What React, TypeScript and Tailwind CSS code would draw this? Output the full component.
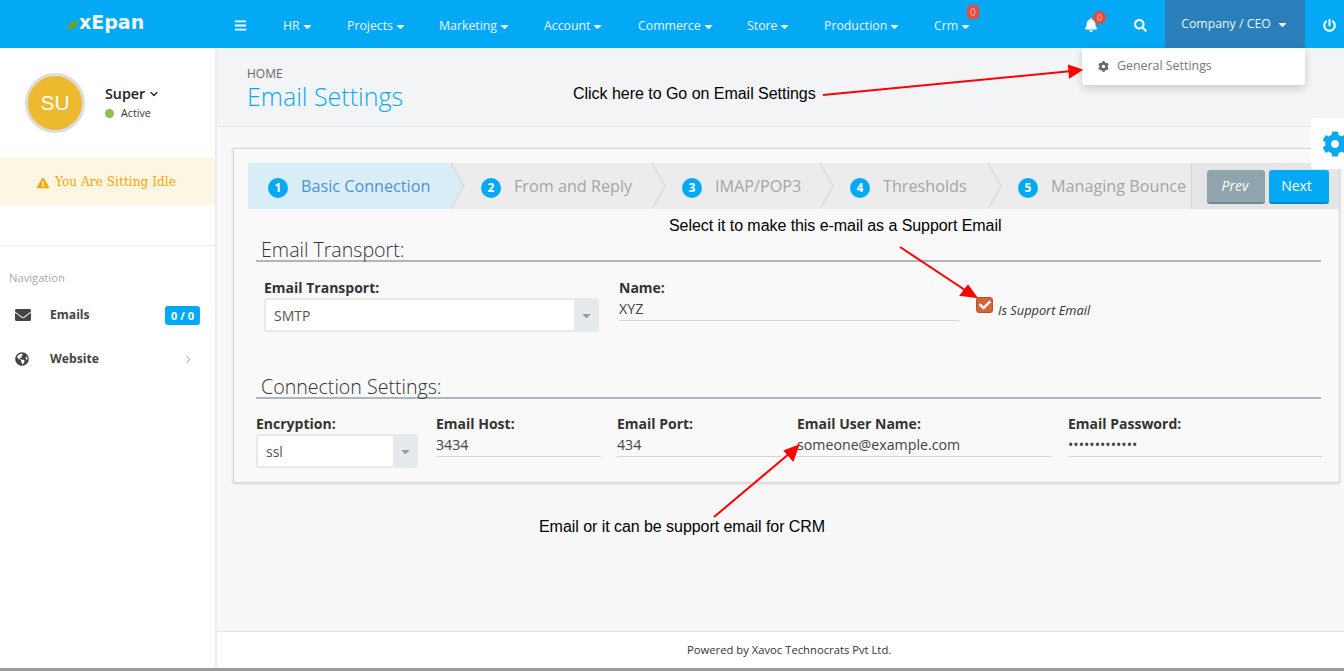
import { ChevronDown, ChevronRight } from 'lucide-react';
import {
  FaBars,
  FaBell,
  FaCaretDown,
  FaCheck,
  FaCog,
  FaEnvelope,
  FaExclamationTriangle,
  FaGlobeAmericas,
  FaPowerOff,
  FaSearch,
} from 'react-icons/fa';

const menus = [
  { label: 'HR', cls: 'w-[64px]' },
  { label: 'Projects', cls: 'w-[92px]' },
  { label: 'Marketing', cls: 'w-[105px]' },
  { label: 'Account', cls: 'w-[94px]' },
  { label: 'Commerce', cls: 'w-[109px]' },
  { label: 'Store', cls: 'w-[77px]' },
  { label: 'Production', cls: 'w-[110px]' },
];

const steps = [
  { n: 1, label: 'Basic Connection', cls: 'w-[203px] pl-[20px] bg-[#d9edf7] rounded-l-[4px] text-[#4a94d0]' },
  { n: 2, label: 'From and Reply', cls: 'w-[201px] pl-[30px] text-[#a5a5a5]' },
  { n: 3, label: 'IMAP/POP3', cls: 'w-[168px] pl-[30px] text-[#a5a5a5]' },
  { n: 4, label: 'Thresholds', cls: 'w-[168px] pl-[30px] text-[#a5a5a5]' },
  { n: 5, label: 'Managing Bounce', cls: 'w-[203px] pl-[30px] text-[#a5a5a5]' },
];

function Field({ label, value, cls }: { label: string; value: string; cls: string }) {
  return (
    <div className={cls}>
      <div className="text-[14px] leading-[20px] font-bold text-[#333]">{label}</div>
      <div className="h-[23px] border-b border-[#d5d5d5] text-[14.2px] leading-[22px] text-[#444]">{value}</div>
    </div>
  );
}

function SelectBox({ value, cls, arrow }: { value: string; cls: string; arrow: string }) {
  return (
    <div className={`flex h-[34px] rounded-[3px] bg-[#e6e9ed] p-[2px] pr-0 ${cls}`}>
      <div className="flex-1 bg-white pl-[8px] text-[14px] leading-[32px] text-[#555]">{value}</div>
      <div className={`flex items-center justify-center text-[#999] ${arrow}`}>
        <FaCaretDown size={13} />
      </div>
    </div>
  );
}

function Step({ n, label, cls, last }: { n: number; label: string; cls: string; last: boolean }) {
  return (
    <div className={`relative flex h-[46px] shrink-0 items-center ${cls}`}>
      <span className="mt-[3px] flex h-[20px] w-[20px] shrink-0 items-center justify-center rounded-full bg-[#03a9f4] text-[12px] font-bold text-white">
        {n}
      </span>
      <span className="ml-[13px] whitespace-nowrap text-[16.2px]">{label}</span>
      {!last && (
        <svg className="absolute -right-[14px] top-0 z-10" width="14" height="46" viewBox="0 0 14 46">
          {n === 1 && <path d="M0 0 L13 23 L0 46 Z" fill="#d9edf7" />}
          {n !== 1 && <path d="M0 0 L13 23 L0 46 Z" fill="#ececec" />}
          <path d="M0 0 L13 23 L0 46" fill="none" stroke="#d2d2d2" />
        </svg>
      )}
    </div>
  );
}

export default function App() {
  return (
    <div className="relative flex h-[671px] w-[1344px] flex-col overflow-hidden bg-[#f8f8f8] font-['Open_Sans',sans-serif]">
      {/* Top bar */}
      <header className="flex h-[48px] shrink-0 items-center bg-[#03a9f4] text-white">
        <div className="flex w-[234px] items-center pl-[66px]">
          <svg width="13" height="11" viewBox="0 0 13 11" className="mt-[3px]">
            <path d="M0.5 10.5 C1 4 6 0.5 12.5 0.5 C12 6 7 10 2 8.8 Z" fill="#6aa52a" />
          </svg>
          <span className="-mt-[3px] font-['DejaVu_Sans',sans-serif] text-[19px] font-bold leading-none text-[#f2f7f4]">xEpan</span>
        </div>
        <FaBars size={13} className="mt-[3px]" />
        <nav className="ml-[36px] flex items-center pt-[4px] text-[12.3px] text-[#e8f6fe]">
          {menus.map((m) => (
            <div key={m.label} className={`flex items-center ${m.cls}`}>
              {m.label}
              <FaCaretDown size={13} className="ml-[1px]" />
            </div>
          ))}
          <div className="relative flex items-center">
            Crm
            <FaCaretDown size={13} className="ml-[1px]" />
            <span className="absolute -top-[12px] left-[33px] h-[14px] rounded-[4px] bg-[#e74c3c] px-[3px] text-[10px] leading-[14px] text-[#ffb0a8]">0</span>
          </div>
        </nav>
        <div className="relative ml-auto mr-[36px] mt-[2px]">
          <FaBell size={14} />
          <span className="absolute -right-[8px] -top-[7px] h-[13px] w-[13px] rounded-full bg-[#e74c3c] text-center text-[9px] leading-[13px] text-[#ffc9c3]">0</span>
        </div>
        <FaSearch size={13} className="mr-[18px] mt-[2px]" />
        <div className="flex h-[48px] w-[140px] items-center justify-center bg-[#2a7fba] pt-[1px] text-[12.3px] text-[#e8f6fe]">
          Company / CEO
          <FaCaretDown size={13} className="ml-[5px]" />
        </div>
        <div className="flex w-[39px] justify-center pl-[9px] pt-[2px]">
          <FaPowerOff size={13} />
        </div>
      </header>

      <div className="flex min-h-0 flex-1">
        {/* Sidebar */}
        <aside className="w-[217px] shrink-0 border-r-[2px] border-[#e9ecf0] bg-white">
          <div className="flex h-[110px] items-center pl-[25px]">
            <div className="flex h-[60px] w-[60px] items-center justify-center rounded-full border-[3px] border-[#dddddd] bg-[#edb92e] font-['Liberation_Sans',sans-serif] text-[21px] text-white">
              SU
            </div>
            <div className="ml-[20px]">
              <div className="-mt-[1px] flex items-center text-[14.3px] font-semibold leading-[20px] text-[#222]">
                Super
                <ChevronDown size={12} strokeWidth={2.5} className="ml-[3px]" />
              </div>
              <div className="mt-[1px] flex items-center text-[10.7px] leading-[16px] text-[#333]">
                <span className="mr-[7px] h-[9px] w-[9px] rounded-full bg-[#8bc34a]" />
                Active
              </div>
            </div>
          </div>
          <div className="flex h-[47px] items-center justify-center bg-[#fdf6e3] pr-[2px] pt-[2px] font-['DejaVu_Serif',serif] text-[12.2px] text-[#ffa500]">
            <FaExclamationTriangle size={12} className="mr-[6px]" />
            You Are Sitting Idle
          </div>
          <div className="mt-[40px] border-t border-[#eeeeee] pl-[9px] pt-[24px] text-[11.2px] leading-[15px] text-[#aaaaaa]">
            Navigation
          </div>
          <div className="mt-[18px] flex h-[24px] items-center pl-[15px] pr-[15px] text-[12.2px] font-bold text-[#444]">
            <FaEnvelope size={16} />
            <span className="ml-[19px]">Emails</span>
            <span className="ml-auto h-[19px] w-[35px] rounded-[3px] bg-[#03a9f4] text-center text-[11px] leading-[19px] text-white">0 / 0</span>
          </div>
          <div className="mt-[20px] flex h-[24px] items-center pl-[15px] pr-[21px] text-[12.2px] font-bold text-[#444]">
            <FaGlobeAmericas size={14} />
            <span className="ml-[21px]">Website</span>
            <ChevronRight size={11} className="ml-auto text-[#888]" />
          </div>
        </aside>

        {/* Main */}
        <main className="flex min-w-0 flex-1 flex-col">
          <div className="h-[79px] shrink-0 border-b border-[#e3e5e8] bg-[#f3f4f6] pl-[30px] pt-[17px]">
            <div className="text-[12px] leading-[17px] text-[#666]">HOME</div>
            <div className="text-[25px] font-light leading-[28px] text-[#03a9f4]">Email Settings</div>
          </div>

          <div className="flex-1 pl-[16px] pt-[21px]">
            <div className="h-[335px] w-[1107px] border border-[#d5d5d5] bg-[#f9f9f9] pl-[14px] pt-[14px] shadow-[0_1px_3px_rgba(0,0,0,0.12)]">
              <div className="flex h-[46px] bg-[#ececec]">
                {steps.map((s, i) => (
                  <Step key={s.n} {...s} last={i === steps.length - 1} />
                ))}
                <div className="flex flex-1 items-start gap-[4px] border-l border-[#d5d5d5] bg-[#e5e5e5] pl-[15px] pt-[7px]">
                  <button className="h-[34px] w-[58px] rounded-[3px] border-b-[2px] border-[#6f8791] bg-[#90a4ae] pb-[2px] pr-[2px] text-[14px] italic text-white">Prev</button>
                  <button className="h-[34px] w-[60px] rounded-[3px] border-b-[2px] border-[#0288d1] bg-[#03a9f4] pb-[2px] pr-[5px] text-[14px] text-white">Next</button>
                </div>
              </div>

              <div className="ml-[8px] mr-[18px] mt-[28px] border-b-[2px] border-[#a9b8c0] pl-[5px] pt-[2px] text-[19.6px] font-light leading-[21px] text-[#333]">
                Email Transport:
              </div>

              <div className="ml-[16px] mt-[16px] flex h-[96px] items-start">
                <div className="w-[335px]">
                  <div className="text-[14px] font-bold leading-[20px] text-[#333]">Email Transport:</div>
                  <SelectBox value="SMTP" cls="w-[335px]" arrow="w-[25px]" />
                </div>
                <Field label="Name:" value="XYZ" cls="ml-[20px] w-[340px]" />
                <div className="ml-[17px] mt-[19px] flex items-start">
                  <span className="flex h-[16px] w-[17px] items-center justify-center rounded-[3px] border border-[#b5532a] bg-[#d2663a] text-white">
                    <FaCheck size={12} />
                  </span>
                  <span className="ml-[5px] mt-[4px] text-[12.8px] italic leading-[18px] text-[#333]">Is Support Email</span>
                </div>
              </div>

              <div className="ml-[8px] mr-[18px] border-b-[2px] border-[#a9b8c0] pl-[5px] pt-[2px] text-[19.6px] font-light leading-[21px] text-[#333]">
                Connection Settings:
              </div>

              <div className="ml-[8px] mt-[15px] flex items-start">
                <div className="w-[162px]">
                  <div className="text-[14px] font-bold leading-[20px] text-[#333]">Encryption:</div>
                  <SelectBox value="ssl" cls="w-[162px]" arrow="w-[25px]" />
                </div>
                <Field label="Email Host:" value="3434" cls="ml-[18px] w-[165px]" />
                <Field label="Email Port:" value="434" cls="ml-[16px] w-[164px]" />
                <Field label="Email User Name:" value="someone@example.com" cls="ml-[16px] w-[255px]" />
                <Field label="Email Password:" value="•••••••••••••" cls="ml-[16px] w-[254px]" />
              </div>
            </div>
          </div>

          <div className="h-[37px] shrink-0 border-t border-[#e5e5e5] bg-white pl-[470px] text-[11.25px] leading-[36px] text-[#333]">
            Powered by Xavoc Technocrats Pvt Ltd.
          </div>
        </main>
      </div>
      <div className="h-[3px] shrink-0 bg-[#999999]" />

      {/* Dropdown menu */}
      <div className="absolute left-[1082px] top-[48px] flex h-[37px] w-[223px] items-center rounded-b-[3px] bg-white pl-[16px] text-[12.4px] text-[#777] shadow-[0_3px_8px_rgba(0,0,0,0.18)]">
        <FaCog size={11} className="mr-[8px] text-[#666]" />
        General Settings
      </div>

      {/* Floating settings tab */}
      <div className="absolute left-[1311px] top-[118px] flex h-[51px] w-[33px] items-center overflow-hidden rounded-l-[4px] bg-white pl-[11px]">
        <FaCog size={26} className="shrink-0 text-[#03a9f4]" />
      </div>

      {/* Annotations */}
      <svg className="absolute left-0 top-0" width="1344" height="671" viewBox="0 0 1344 671">
        <g stroke="#ff0000" strokeWidth="2" fill="#ff0000">
          <line x1="823" y1="95" x2="1072" y2="71" />
          <path d="M1081 70 L1069 66 L1070 77 Z" />
          <line x1="900" y1="247" x2="968" y2="292" />
          <path d="M976 297 L968 286 L961 295 Z" />
          <line x1="714" y1="517" x2="790" y2="453" />
          <path d="M798 446 L785 451 L793 460 Z" />
        </g>
      </svg>
      <div className="absolute left-[573px] top-[84px] font-['Liberation_Sans',sans-serif] text-[16px] leading-[19px] tracking-[-0.03px] text-black">Click here to Go on Email Settings</div>
      <div className="absolute left-[669px] top-[216px] font-['Liberation_Sans',sans-serif] text-[16px] leading-[19px] tracking-[-0.06px] text-black">Select it to make this e-mail as a Support Email</div>
      <div className="absolute left-[539px] top-[517px] font-['Liberation_Sans',sans-serif] text-[16px] leading-[19px] tracking-[-0.05px] text-black">Email or it can be support email for CRM</div>
    </div>
  );
}
